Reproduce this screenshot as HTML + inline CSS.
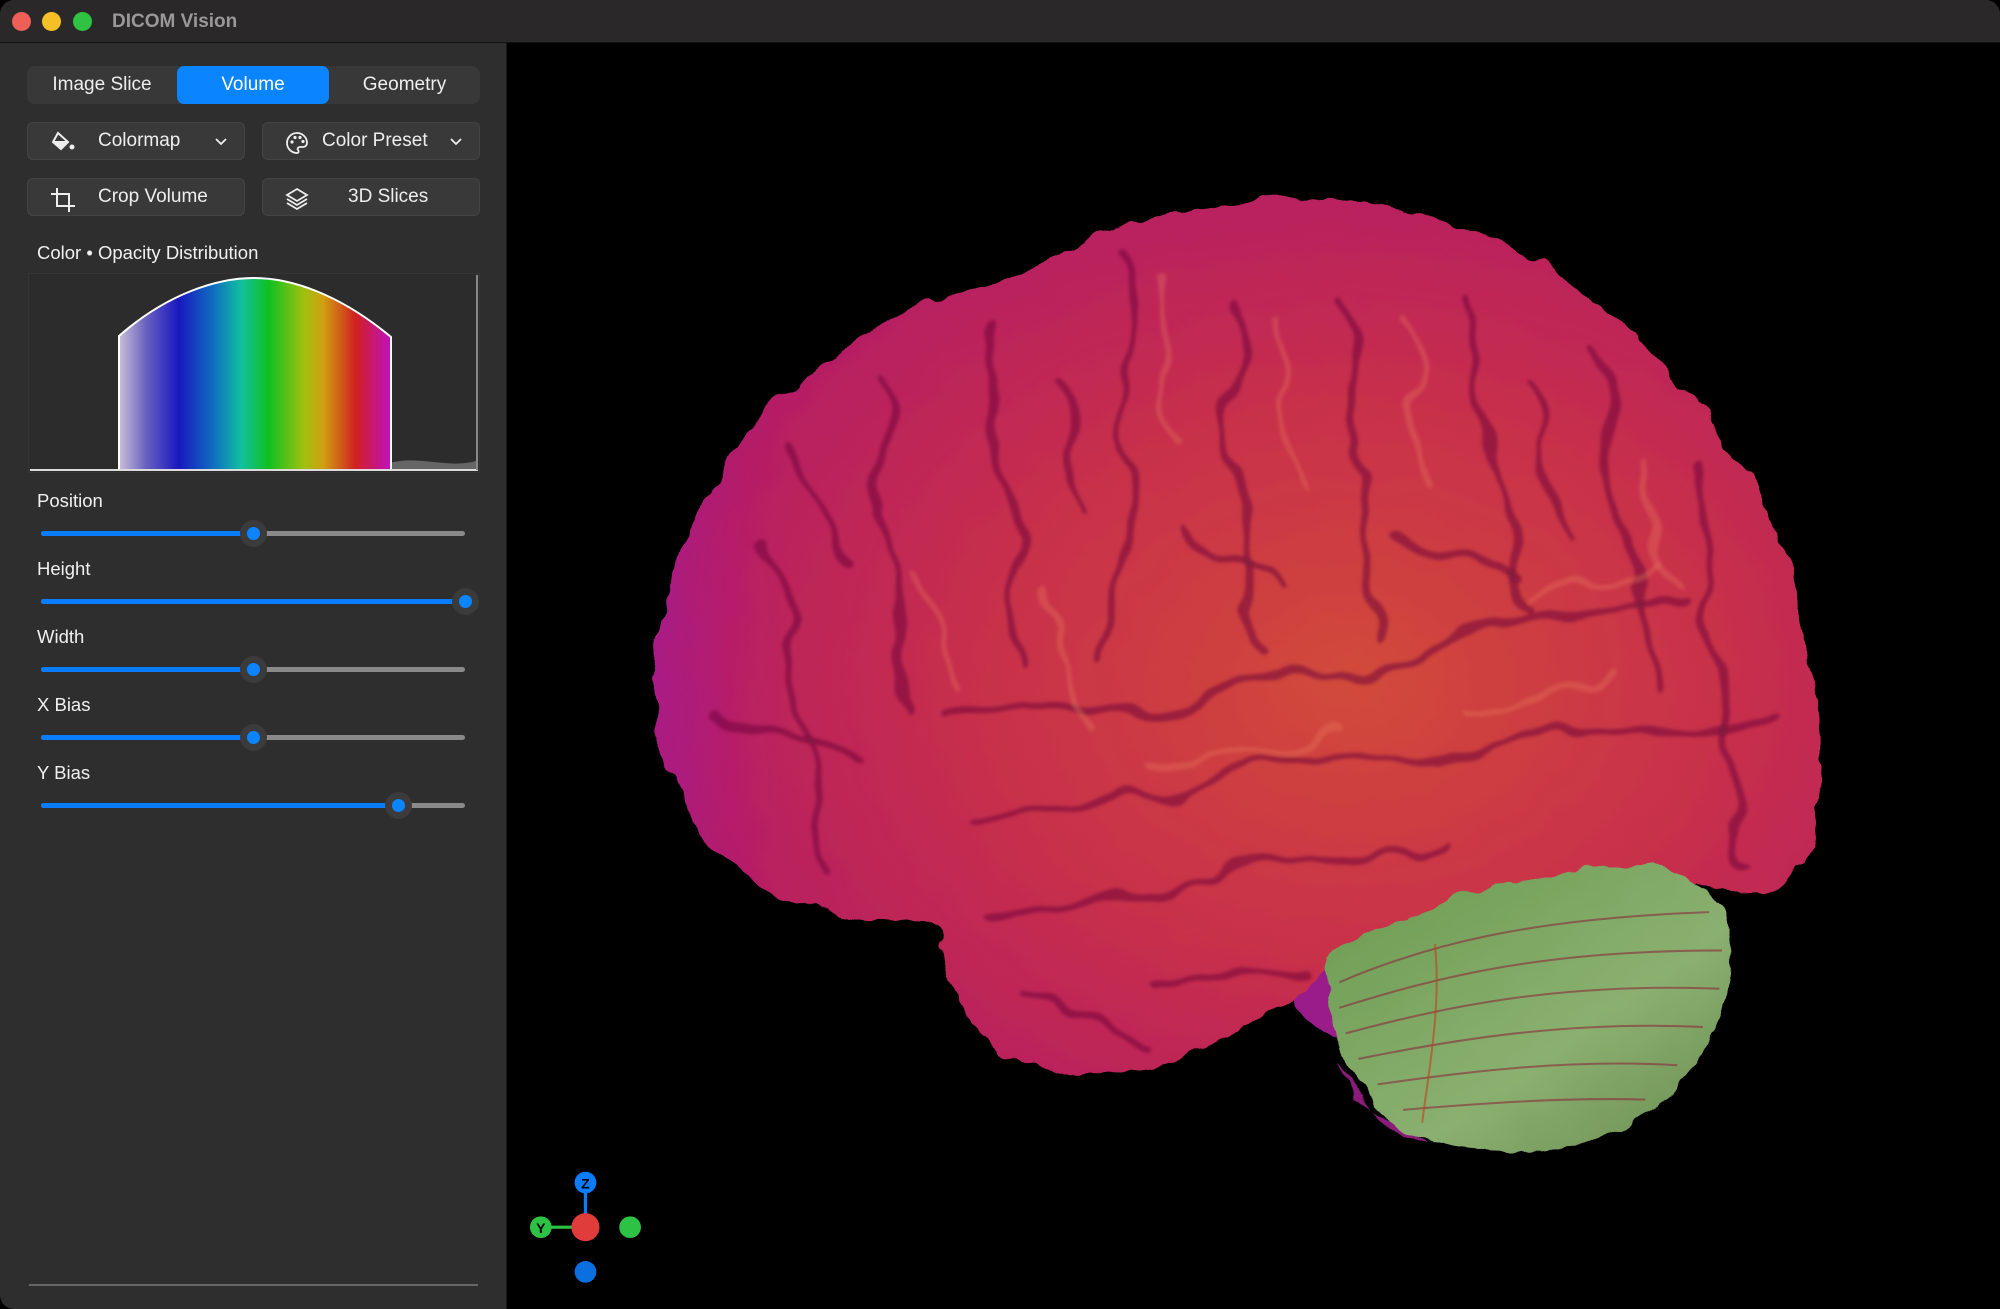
<!DOCTYPE html>
<html><head><meta charset="utf-8"><style>
*{margin:0;padding:0;box-sizing:border-box}
body{width:2000px;height:1309px;background:#000;font-family:"Liberation Sans",sans-serif;overflow:hidden;position:relative}
.win{position:absolute;inset:0;border-radius:14px;overflow:hidden;background:#000}
.title{position:absolute;left:0;top:0;width:2000px;height:43px;background:#2a2829;border-bottom:1px solid #111}
.dot{position:absolute;top:12px;width:19px;height:19px;border-radius:50%}
.title span{position:absolute;left:112px;top:11px;color:#9a9899;font-weight:bold;font-size:19px}
.side{position:absolute;left:0;top:43px;width:507px;height:1266px;background:#2f2e2e;border-right:1px solid #1a1a1a}
.seg{position:absolute;left:27px;top:23px;width:453px;height:38px;background:#393838;border-radius:8px}
.seg div{position:absolute;top:0;height:38px;line-height:38px;text-align:center;color:#eee;font-size:19px}
.btn{position:absolute;width:218px;height:38px;background:#3a3939;border:1px solid #444;border-radius:6px;color:#eee;font-size:19px;line-height:36px}
.btn svg{position:absolute;top:8px}
.btn svg.chev{top:14px}
.lbl{position:absolute;left:37px;color:#f0f0f0;font-size:18.5px}
.track{position:absolute;left:41px;width:424px;height:5px;border-radius:3px;background:#8a8a8a}
.fill{position:absolute;left:0;top:0;height:5px;border-radius:3px;background:#0a7cff}
.thumb{position:absolute;top:-11px;width:27px;height:27px;border-radius:50%;background:#3b3b3b;margin-left:-13px}
.thumb:after{content:"";position:absolute;left:7px;top:7px;width:13px;height:13px;border-radius:50%;background:#0a84ff}
</style></head><body><div class="win">
<div class="title">
<div class="dot" style="left:12px;background:#ed5f57"></div>
<div class="dot" style="left:42px;background:#f5c027"></div>
<div class="dot" style="left:73px;background:#2fc243"></div>
<span>DICOM Vision</span></div>
<div class="side">
<div class="seg"><div style="left:0;width:150px">Image Slice</div><div style="left:150px;width:152px;background:#0a84ff;border-radius:7px;color:#fff">Volume</div><div style="left:302px;width:151px">Geometry</div></div>
<div class="btn" style="left:27px;top:79px"><svg style="left:22px" width="26" height="22" viewBox="0 0 26 22"><path d="M8 2 L18 11 L11 18 L3 11 Z M3 11 L18 11" fill="none" stroke="#eee" stroke-width="2"/><path d="M3 11 L18 11 L11 18 Z" fill="#eee"/><circle cx="22" cy="16" r="2.5" fill="#eee"/></svg><span style="position:absolute;left:70px">Colormap</span><svg class="chev" style="left:186px" width="14" height="9" viewBox="0 0 14 9"><path d="M2 2 L7 7 L12 2" fill="none" stroke="#eee" stroke-width="1.8"/></svg></div>
<div class="btn" style="left:262px;top:79px"><svg style="left:22px" width="24" height="24" viewBox="0 0 24 24"><path d="M12 2a10 10 0 1 0 0 20c2 0 2-2 1-3s0-3 2-3h3a4 4 0 0 0 4-4C22 6 17 2 12 2z" fill="none" stroke="#eee" stroke-width="1.8"/><circle cx="7" cy="11" r="1.6" fill="#eee"/><circle cx="10" cy="6.5" r="1.6" fill="#eee"/><circle cx="15" cy="6.5" r="1.6" fill="#eee"/><circle cx="18" cy="10.5" r="1.6" fill="#eee"/></svg><span style="position:absolute;left:59px">Color Preset</span><svg class="chev" style="left:186px" width="14" height="9" viewBox="0 0 14 9"><path d="M2 2 L7 7 L12 2" fill="none" stroke="#eee" stroke-width="1.8"/></svg></div>
<div class="btn" style="left:27px;top:135px"><svg style="left:22px" width="26" height="26" viewBox="0 0 26 26"><path d="M7 1 V19 H25 M1 7 H19 V25" fill="none" stroke="#eee" stroke-width="2"/></svg><span style="position:absolute;left:70px">Crop Volume</span></div>
<div class="btn" style="left:262px;top:135px"><svg style="left:22px" width="24" height="24" viewBox="0 0 24 24"><path d="M12 2 L22 8 L12 14 L2 8 Z" fill="none" stroke="#eee" stroke-width="1.8"/><path d="M2 12 L12 18 L22 12 M2 16 L12 22 L22 16" fill="none" stroke="#eee" stroke-width="1.8"/></svg><span style="position:absolute;left:85px">3D Slices</span></div>
<div class="lbl" style="top:199px">Color &#8226; Opacity Distribution</div>
<svg style="position:absolute;left:28px;top:230px" width="452" height="200" viewBox="0 0 452 200">
<defs><linearGradient id="rb" x1="0" x2="1"><stop offset="0" stop-color="#c8c0d8"/><stop offset=".1" stop-color="#6a60c0"/><stop offset=".22" stop-color="#1818c0"/><stop offset=".35" stop-color="#1070c0"/><stop offset=".45" stop-color="#10c0a0"/><stop offset=".55" stop-color="#10c020"/><stop offset=".68" stop-color="#a0c010"/><stop offset=".75" stop-color="#d0a010"/><stop offset=".87" stop-color="#d02020"/><stop offset="1" stop-color="#c010c0"/></linearGradient></defs>
<rect x="0" y="0" width="452" height="200" fill="#2d2c2c" stroke="#3c3c3c"/>
<path d="M362 190 C390 182 420 196 448 188 L448 197 L362 197Z" fill="#666"/>
<path d="M91 197 L91 63 C140 20 190 5 226 5 C262 5 310 20 363 64 L363 197 Z" fill="url(#rb)" stroke="#fff" stroke-width="2"/>
<path d="M2 197 H450" stroke="#ddd" stroke-width="2"/><path d="M449 2 V197" stroke="#888" stroke-width="2"/>
</svg>
<div class="lbl" style="top:447px">Position</div>
<div class="track" style="top:488px"><div class="fill" style="width:212px"></div><div class="thumb" style="left:212px"></div></div>
<div class="lbl" style="top:515px">Height</div>
<div class="track" style="top:556px"><div class="fill" style="width:424px"></div><div class="thumb" style="left:424px"></div></div>
<div class="lbl" style="top:583px">Width</div>
<div class="track" style="top:624px"><div class="fill" style="width:212px"></div><div class="thumb" style="left:212px"></div></div>
<div class="lbl" style="top:651px">X Bias</div>
<div class="track" style="top:692px"><div class="fill" style="width:212px"></div><div class="thumb" style="left:212px"></div></div>
<div class="lbl" style="top:719px">Y Bias</div>
<div class="track" style="top:760px"><div class="fill" style="width:357px"></div><div class="thumb" style="left:357px"></div></div>
<div style="position:absolute;left:29px;top:1241px;width:449px;height:2px;background:#666"></div>
</div>
<svg style="position:absolute;left:0;top:0" width="2000" height="1309" viewBox="0 0 1568 1026">
<defs>
<radialGradient id="br" cx="0.6" cy="0.55" r="0.7"><stop offset="0" stop-color="#d24a3a"/><stop offset=".45" stop-color="#c8304a"/><stop offset=".8" stop-color="#b82060"/><stop offset="1" stop-color="#a0187a"/></radialGradient>
<linearGradient id="lft" x1="0" x2="1"><stop offset="0" stop-color="#a81a8a" stop-opacity=".9"/><stop offset=".35" stop-color="#b81a6a" stop-opacity="0"/></linearGradient>
<linearGradient id="cb" x1="0" y1="0" x2="1" y2="1"><stop offset="0" stop-color="#6a9a50"/><stop offset=".6" stop-color="#8ab070"/><stop offset="1" stop-color="#6a8a50"/></linearGradient>
<filter id="bump" x="-5%" y="-5%" width="110%" height="110%"><feTurbulence type="fractalNoise" baseFrequency="0.03" numOctaves="3" seed="3" result="n"/><feDisplacementMap in="SourceGraphic" in2="n" scale="18" xChannelSelector="R" yChannelSelector="G"/></filter>
<filter id="wob"><feTurbulence type="fractalNoise" baseFrequency="0.02" numOctaves="2" seed="7" result="n"/><feDisplacementMap in="SourceGraphic" in2="n" scale="30" xChannelSelector="R" yChannelSelector="G"/><feGaussianBlur stdDeviation="1.2"/></filter>
</defs>
<g filter="url(#bump)">
<path d="M1045 830 C1060 860 1090 890 1120 895 L1100 880 C1060 870 1050 850 1045 830Z" fill="#8a1a7a"/>
<path d="M1000 760 C1020 740 1040 745 1050 770 L1060 810 C1040 820 1010 800 1000 760Z" fill="#9a1a8a"/>
<path d="M820 205 C860 180 940 160 1000 155 C1080 155 1160 175 1230 220 C1300 270 1360 340 1395 420 C1425 490 1432 580 1422 650 C1410 690 1390 700 1360 700 L1300 690 C1200 700 1100 730 1040 760 C1000 800 920 845 850 845 C790 840 750 800 738 760 L735 722 C680 720 610 710 570 680 C525 630 510 560 515 500 C525 420 575 340 640 290 C700 240 760 225 820 205Z" fill="url(#br)"/>
<path d="M820 205 C760 225 700 240 640 290 C575 340 525 420 515 500 C510 560 525 630 570 680 C610 710 680 720 735 722 L740 400 Z" fill="url(#lft)"/>
</g>
<g filter="url(#wob)">
<g fill="none" stroke="#6a0a3a" stroke-width="6" stroke-opacity=".5" stroke-linecap="round">
<path d="M880 200 C900 260 860 300 880 360 C900 420 860 470 870 520"/>
<path d="M960 240 C990 280 940 320 970 380 C1000 430 960 470 990 510"/>
<path d="M1050 230 C1080 280 1040 330 1070 370 C1090 410 1060 450 1080 500"/>
<path d="M1150 230 C1170 280 1140 320 1170 360 C1200 410 1170 450 1200 480"/>
<path d="M1250 280 C1270 330 1240 370 1280 420 C1300 460 1280 500 1300 540"/>
<path d="M780 260 C800 300 760 340 790 380 C810 420 780 460 800 520"/>
<path d="M690 300 C710 340 670 380 700 420 C720 470 690 520 710 560"/>
<path d="M600 420 C630 460 600 520 630 560 C650 600 620 640 650 680"/>
<path d="M740 560 C820 540 880 580 960 540 C1020 510 1080 540 1140 500 C1200 470 1260 500 1320 470"/>
<path d="M760 640 C840 620 900 640 980 600 C1060 570 1120 620 1200 580 C1260 560 1330 590 1390 560"/>
<path d="M780 720 C840 700 900 720 960 680 C1020 660 1080 690 1140 660"/>
<path d="M1330 360 C1350 420 1320 480 1350 540 C1370 590 1340 640 1370 680"/>
<path d="M560 560 C600 580 640 560 680 600"/>
<path d="M900 770 C950 750 990 780 1030 760"/>
<path d="M830 300 C850 330 830 360 850 400"/><path d="M1200 300 C1220 340 1200 380 1230 420"/>
<path d="M620 350 C650 380 640 410 660 440"/><path d="M1100 420 C1130 440 1160 430 1190 450"/>
<path d="M930 420 C960 440 990 430 1010 460"/><path d="M800 780 C840 790 870 800 900 820"/>
</g>
<g fill="none" stroke="#f08060" stroke-width="5" stroke-opacity=".3" stroke-linecap="round">
<path d="M910 220 C930 270 900 310 920 350"/><path d="M1000 250 C1020 300 1000 340 1020 380"/>
<path d="M1100 250 C1120 300 1100 340 1120 380"/><path d="M1200 470 C1240 450 1280 470 1300 440"/>
<path d="M900 600 C950 580 1000 600 1050 570"/><path d="M1150 560 C1190 540 1230 560 1260 530"/>
<path d="M820 470 C840 500 830 540 850 570"/><path d="M720 450 C740 480 730 520 750 540"/>
<path d="M1290 360 C1300 400 1290 430 1310 460"/>
</g>
</g>
<g filter="url(#bump)">
<path d="M1040 750 C1100 710 1180 690 1250 680 C1300 675 1345 690 1358 730 C1365 780 1345 830 1290 875 C1240 905 1180 908 1130 895 C1090 885 1060 860 1050 820 C1045 790 1040 770 1040 750Z" fill="url(#cb)"/>
</g>
<g fill="none" stroke="#8a2a3a" stroke-width="1.6" stroke-opacity=".6">
<path d="M1050 770 C1120 740 1200 720 1340 715"/><path d="M1050 790 C1130 765 1210 745 1350 745"/>
<path d="M1055 810 C1130 790 1220 770 1348 775"/><path d="M1065 830 C1140 815 1230 800 1335 805"/>
<path d="M1080 850 C1150 840 1230 830 1315 835"/><path d="M1100 870 C1160 865 1230 860 1290 862"/>
<path d="M1125 740 C1130 790 1120 840 1115 880" stroke="#c04020"/>
</g>
<line x1="459" y1="932" x2="459" y2="962" stroke="#0a7cff" stroke-width="2.5"/>
<line x1="425" y1="962" x2="455" y2="962" stroke="#2ec244" stroke-width="2.5"/>
<circle cx="459" cy="927" r="8.5" fill="#0a7cff"/><text x="459" y="931.5" font-size="11" text-anchor="middle" font-family="Liberation Sans" font-weight="bold">Z</text>
<circle cx="424" cy="962" r="8.5" fill="#2ec244"/><text x="424" y="966.5" font-size="11" text-anchor="middle" font-family="Liberation Sans" font-weight="bold">Y</text>
<circle cx="459" cy="962" r="11" fill="#e03c3c"/>
<circle cx="494" cy="962" r="8.5" fill="#2ec244"/>
<circle cx="459" cy="997" r="8.5" fill="#0a70e0"/>
</svg>
</div></body></html>
